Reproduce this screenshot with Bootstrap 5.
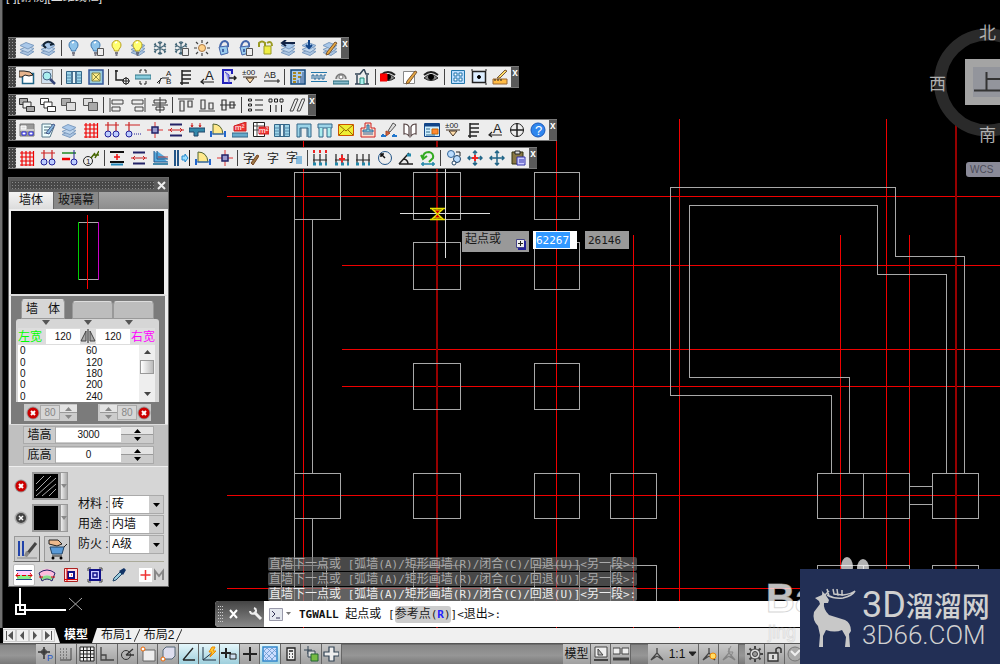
<!DOCTYPE html>
<html lang="zh-CN">
<head>
<meta charset="utf-8">
<meta name="viewport" content="width=device-width, initial-scale=1">
<title>墙体</title>
<link href="https://cdn.jsdelivr.net/npm/bootstrap@5.3.0/dist/css/bootstrap.min.css" rel="stylesheet">
<style>
  :root { --cjk: "Liberation Sans", "Noto Sans CJK SC", sans-serif; --mono: "DejaVu Sans Mono", "Noto Sans CJK SC", monospace; }
  body { font-family: var(--cjk); font-size: 12px; line-height: 16px; background: #000; color: #111; min-height: 100vh; }
  button, input, select { font: inherit; color: inherit; border: 0; padding: 0; margin: 0; border-radius: 0; min-width: 0; }
  svg { display: block; flex: none; }
  .workspace { background: #000; min-height: 600px; box-shadow: inset 2px 0 #707070, inset 3px 0 #333; }
  .plan { top: 0; left: 0; width: 100%; height: 100%; fill: none; }
  .view-label { left: 6px; top: -11px; color: #ddd; }

  /* floating toolbars */
  .toolbars { left: 8px; top: 37px; display: grid; grid-template-rows: 29px 28px 25px 28px 22px; }
  .toolstrip { height: 22px; background: #ededed; border-top: 1px solid #777; border-bottom: 1px solid #777; }
  .toolstrip .grip { width: 8px; background: #555 radial-gradient(#999 25%, #444 30%) 0 0 / 3px 3px; }
  .toolstrip .shut { width: 8px; background: #5a5a5a; color: #fff; font-size: 10px; line-height: 10px; font-weight: bold; align-self: stretch; display: flex; justify-content: center; padding-top: 1px; }
  .toolstrip .tool { flex: 1 1 0; background: none; display: flex; justify-content: center; align-items: center; }
  .toolstrip .rule { flex: 0 0 5px; display: flex; justify-content: center; }
  .rule::before { content: ""; width: 1px; height: 16px; background: #444; }
  #bar-layers { width: 341px; } #bar-annot { width: 511px; } #bar-order { width: 308px; }
  #bar-arch { width: 549px; } #bar-wall { width: 529px; }

  /* wall palette */
  .palette { left: 8px; top: 177px; width: 161px; border: 1px solid #666; background: #d6d6d6; }
  .palette-title { height: 14px; background: #5c5c5c; padding-left: 2px; }
  .palette-title .dots { height: 8px; background: radial-gradient(#8a8a8a 30%, #484848 35%) 0 0 / 3px 3px; }
  .palette-title button { width: 14px; background: none; color: #eee; }
  .modes { height: 17px; background: linear-gradient(#a5a5a5, #8d8d8d); }
  .modes button { width: 45px; background: #888; border-right: 1px solid #666; line-height: 15px; }
  .modes .on { background: linear-gradient(#f4f4f4, #dcdcdc); }
  .preview { background: #000; height: 87px; border: 2px solid #eee; border-right-width: 4px; border-bottom-color: #ddd; }
  .group { background: #7b7b7b; padding: 3px 6px 0 5px; height: 128px; border-left: 2px solid #eee; border-right: 3px solid #eee; }
  .leafs { height: 20px; padding: 0 5px; }
  .leafs button { width: 41px; height: 18px; background: #bdbdbd; border: 1px solid #999; border-top-color: #ddd; border-radius: 4px 4px 0 0; }
  .leafs .on { width: 44px; height: 20px; background: #d6d6d6; margin-right: 7px; }
  .sheet { background: #d6d6d6; border-radius: 3px 3px 0 0; padding: 0 4px 1px 2px; height: 83px; }
  .marks { height: 9px; padding: 1px 22px 0 24px; }
  .widths { height: 17px; background: #ddd; }
  .widths input { width: 34px; background: #fff; text-align: center; font-size: 10px; height: 15px; }
  .left-w { color: #0f0; } .right-w { color: #f0f; }
  .sizes { height: 57px; background: #fff; font-size: 10px; line-height: 11px; overflow: hidden; }
  .sizes table { line-height: 11px; width: 100%; }
  .sizes td { padding: 0; height: 11px; } .sizes td:first-child { width: 68px; padding-left: 2px; }
  .scroller { width: 16px; background: #eee; padding: 4px 1px; }
  .scroller .thumb { width: 14px; height: 14px; background: linear-gradient(90deg, #fff, #bbb); border: 1px solid #999; }
  .lockrow { height: 18px; margin-top: 2px; }
  .lockrow .cell { background: #c8c8c8; height: 17px; padding-left: 2px; }
  .lockrow input { width: 20px; background: #d6d6d6; border: 1px solid #aaa; text-align: center; font-size: 10px; color: #888; height: 15px; }
  .heights { background: #c0c0c0; height: 42px; padding: 1px 14px 0 14px; border-top: 1px solid #ddd; }
  .heights .line { height: 18px; margin-bottom: 2px; background: #ccc; border: 1px solid #aaa; }
  .heights label { width: 32px; text-align: center; border-right: 1px solid #aaa; }
  .heights input { flex: 1; text-align: center; font-size: 10px; background: #fff; height: 14px; }
  .spin { width: 32px; height: 16px; background: linear-gradient(#e4e4e4 7px, #999 7px 8px, #ccc 8px); display: flex; justify-content: center; align-items: center; }
  .spin.small-spin { width: 17px; }
  .finish { padding: 5px 4px 0 5px; height: 95px; border-top: 1px solid #eee; }
  .finish button { background: none; }
  .swatch { width: 28px; height: 28px; border: 2px solid #999 !important; background: #000 !important; }
  .more { width: 8px; height: 28px; background: linear-gradient(90deg, #eee, #aaa) !important; border: 1px solid #999 !important; }
  .finish .big { width: 26px; height: 26px; border: 1px solid #999; border-right-color: #666; border-bottom-color: #666; background: #ccc; }
  .props { padding-top: 22px; }
  .props label { width: 31px; white-space: nowrap; } .props .line { height: 20px; }
  .props select { width: 55px; height: 19px; padding: 0 2px; border: 1px solid #aaa; appearance: none; background: #fff url("data:image/svg+xml,%3Csvg xmlns='http://www.w3.org/2000/svg' width='14' height='17'%3E%3Cpath fill='%23ccc' d='M0 0h14v17H0z'/%3E%3Cpath d='M4 7h7l-3.5 4z'/%3E%3C/svg%3E") no-repeat right; }
  .kinds { border-top: 1px solid #aa9; margin: 0 4px; height: 25px; padding-top: 2px; }
  .kinds button { background: none; width: 24px; height: 22px; display: flex; justify-content: center; align-items: center; }
  .kinds .on { background: #fff; border: 1px solid #bbb; border-radius: 2px; width: 22px; }

  /* input beside the cursor */
  .dyn { left: 462px; top: 231px; font-size: 11px; line-height: 17px; color: #1a1a1a; font-family: var(--mono); }
  .dyn .ask { width: 67px; height: 21px; background: #999; padding: 0 3px; font-size: 12px; }
  .dyn .val { width: 44px; height: 18px; background: #999; padding: 1px 3px; border: 0; }
  .dyn .val input { width: 34px; height: 16px; background: none; }
  .dyn .val.live { background: #fff; } .dyn .val.live input { background: #39f; color: #fff; }

  /* command line */
  .console { left: 215px; right: 0; bottom: 1px; }
  .echo { margin-left: 53px; width: 369px; height: 14px; line-height: 14px; margin-bottom: 1px; background: rgba(120,120,120,.6); color: #aaa; border-radius: 2px; padding-left: 1px; white-space: nowrap; overflow: hidden; }
  .echo.now { color: #eee; background: rgba(130,130,130,.75); }
  .asc { font-family: var(--mono); font-size: 11px; white-space: pre; }
  .prompt { height: 26px; background: #fff; border-radius: 4px 0 0 4px; overflow: hidden; line-height: 24px; }
  .prompt .head { width: 49px; background: linear-gradient(#444, #888); padding-left: 3px; }
  .prompt button { background: none; }
  .prompt .opt { background: #ccc; border-radius: 3px; color: #222; text-decoration: none; line-height: 16px; display: inline-block; }
  .opt b { color: #22f; }

  .layouts { height: 15px; background: #f0f0f0; margin-left: 3px; line-height: 15px; }
  .layouts button { background: none; }
  .layouts .step { width: 13px; height: 13px; border: 1px solid #ccc; display: flex; justify-content: center; align-items: center; }
  .layouts .page { padding: 0 2px 0 4px; white-space: nowrap; }
  .layouts .cur { background: #000; color: #fff; font-weight: bold; width: 42px; padding: 0 7px; clip-path: polygon(0 0, 100% 0, 88% 100%, 12% 100%); }
  .status { height: 21px; background: linear-gradient(#555 0 1px, #868686 2px, #969696 60%, #787878); }
  .status .key { background: linear-gradient(#c8c8c8, #a0a0a0); border-right: 1px solid #666; height: 20px; display: flex; justify-content: center; align-items: center; flex: 1 1 0; }
  .status .hot { background: linear-gradient(#e4f6fa, #9ecfdc); }
  .toggles { width: 306px; margin-left: 36px; }
  .rightkeys { margin-left: 221px; }
  .rightkeys .key { flex: 0 0 20px; }
  .rightkeys .key.text { flex-basis: 28px; }
  .rightkeys .key.scale { flex-basis: 51px; margin-left: 17px; }
  .rightkeys .key.gear { margin-left: 6px; }

  .cube { right: 0; top: 20px; }
  .paws { right: 0; bottom: 0; width: 240px; height: 110px; }
  .ghost { right: 0; bottom: 0; }
  .brand { right: 0; bottom: 0; width: 200px; height: 95px; background: #222f55; color: #d0d0d0; padding: 15px 0 0 12px; z-index: 3; }
  .brand .words { font-family: Roboto, "Noto Sans CJK SC", sans-serif; white-space: nowrap; }
  .brand .top-line { font-size: 28px; line-height: 42px; height: 36px; font-weight: 500; }
  .brand .top-line span { font-size: 36px; font-weight: 400; }
  .brand .low-line { font-size: 26px; line-height: 30px; font-weight: 300; }
</style>
<script src="https://cdn.jsdelivr.net/npm/bootstrap@5.3.0/dist/js/bootstrap.bundle.min.js"></script>
</head>
<body class="d-flex flex-column position-relative overflow-hidden">

<main class="workspace position-relative flex-grow-1 overflow-hidden">
  <svg class="plan position-absolute" aria-label="plan">
    <g stroke="#f00000" shape-rendering="crispEdges">
      <path d="M227 196.500H4000M342 265.500H4000M342 349.500H4000M342 386.500H4000M227 495.500H4000M227 588.500H4000"/>
      <path d="M303.500 119V4000M556.500 119V4000M633.500 235V4000M679.500 119V4000M840.500 235V4000M886.500 119V4000M909.500 235V4000"/>
      <path stroke="#960000" stroke-width="2" d="M437 119V4000M956 119V4000"/>
    </g>
    <g stroke="#a8a8a8" shape-rendering="crispEdges">
      <path d="M294.500 172.500h46v47h-46zM413.500 172.500h47v47h-47zM534.500 172.500h45v47h-45zM413.500 242.500h47v47h-47zM534.500 242.500h45v47h-45zM413.500 363.500h47v46h-47zM534.500 363.500h45v46h-45z"/>
      <path d="M294.500 473.500h46v45h-46zM413.500 473.500h47v45h-47zM534.500 473.500h45v45h-45zM610.500 473.500h46v45h-46zM817.500 473.500h46v45h-46zM863.500 473.500h46v45h-46zM932.500 473.500h46v45h-46z"/>
      <path d="M281.500 565.500h45v47h-45zM413.500 565.500h47v47h-47zM534.500 565.500h45v47h-45zM610.500 565.500h46v47h-46zM817.500 565.500h92v47h-92zM863.500 565v47M932.500 565.500h46v47h-46z"/>
      <path d="M294.500 219V473M312.500 220V473M294.500 519V627M312.500 519V627M910 486.500H932M910 504.500H932"/>
      <path d="M831.500 473V395.500H670.500V187.500H895.500V256.500H964.500V473M849.500 473V377.500H689.500V205.500H877.500V274.500H946.500V473"/>
    </g>
    <path stroke="#ddd" d="M400 213.500h90M445.500 169v89"/>
    <g stroke="#e8e000"><path stroke-width="1.500" d="M430 208.500h15M430 219.500h15M432 209l11 10M443 209l-11 10"/><path fill="#c80000" d="M434 210h7l-3.500 4zM434 218h7l-3.500-4z"/></g>
    <g stroke="#fff" stroke-width="2"><path d="M20 588V604M25 610H66M16 605h9v9h-9z"/><path stroke-width="2" d="M20 606v4h4"/><path stroke="#aaa" stroke-width="1" d="M69 598l13 12M82 598l-13 12"/></g>
  </svg>
  <div class="view-label position-absolute">[-][俯视][二维线框]</div>

  <svg class="cube position-absolute" width="76" height="160" viewBox="924 20 76 160">
    <circle cx="988" cy="82.500" r="48" fill="none" stroke="#2a2a2a" stroke-width="12"/>
    <path fill="#a4a4a4" d="M965 59h40v46h-40z"/><path fill="#93959c" d="M973 67h30v30h-30z"/>
    <path stroke="#333" stroke-width="2" fill="none" d="M974 90.500h30M986.500 72v18M987 79h14"/>
    <g fill="#b0b0b0" font-size="17" font-family="Noto Sans CJK SC, sans-serif"><text x="979" y="39">北</text><text x="929" y="90">西</text><text x="979" y="141">南</text></g>
    <rect x="966" y="162" width="50" height="15" rx="3" fill="#8a8a98"/><text x="970" y="173" font-size="10" fill="#4c4c58" font-family="Liberation Sans, sans-serif">WCS</text>
  </svg>

  <div class="toolbars position-absolute" id="toolbars"></div>

  <section class="palette position-absolute">
    <div class="palette-title d-flex align-items-center"><div class="dots flex-grow-1"></div><button aria-label="关闭"><svg width="14" height="12"><path stroke="#eee" stroke-width="2" d="M4 3l7 7M11 3l-7 7"/></svg></button></div>
    <div class="modes d-flex"><button class="on">墙体</button><button>玻璃幕</button></div>
    <div class="preview"><svg class="mx-auto" width="152" height="83" viewBox="0 0 152 83" fill="none" shape-rendering="crispEdges"><path stroke="#aaa" d="M66 11.500h20M66 68.500h20"/><path stroke="#0c0" d="M66.500 11v58"/><path stroke="#c0c" d="M86 11v58"/><path stroke="red" d="M75.500 4v74"/></svg></div>
    <div class="group">
      <div class="leafs d-flex align-items-end"><button class="on">墙&nbsp;&nbsp; 体</button><button aria-label="2"></button><button aria-label="3"></button></div>
      <div class="sheet">
        <div class="marks d-flex justify-content-between"><svg width="8" height="5"><path fill="#555" d="M0 0h8L4 5z"/></svg><svg width="8" height="5"><path fill="#555" d="M0 0h8L4 5z"/></svg><svg width="8" height="5"><path fill="#555" d="M0 0h8L4 5z"/></svg></div>
        <div class="widths d-flex align-items-center"><label class="left-w" for="lw">左宽</label><input class="ms-1" id="lw" value="120"><svg width="16" height="15" viewBox="0 0 16 15"><path fill="#aaa" stroke="#444" d="M6 2v10H1zM10 2v10h5z"/><path stroke="#222" d="M8 0v14"/></svg><input id="rw" value="120"><label class="right-w ms-auto" for="rw">右宽</label></div>
        <div class="sizes d-flex"><table><tbody><tr><td>0</td><td>60</td></tr><tr><td>0</td><td>120</td></tr><tr><td>0</td><td>180</td></tr><tr><td>0</td><td>200</td></tr><tr><td>0</td><td>240</td></tr></tbody></table>
          <div class="scroller d-flex flex-column align-items-center justify-content-between"><svg width="7" height="5"><path d="M0 5h7L3.500 1z" fill="#444"/></svg><div class="thumb"></div><svg width="7" height="18"><path d="M0 12h7L3.500 16z" fill="#444"/></svg></div></div>
      </div>
      <div class="lockrow d-flex justify-content-between px-2">
        <div class="cell d-flex align-items-center"><svg width="14" height="14" viewBox="0 0 14 14"><use href="#no"/></svg><input aria-label="左" value="80"><div class="spin small-spin"><svg width="9" height="12"><path fill="#888" d="M1 4h7L4.500 0zM1 8h7L4.500 12z"/></svg></div></div>
        <div class="cell d-flex align-items-center"><div class="spin small-spin"><svg width="9" height="12"><path fill="#888" d="M1 4h7L4.500 0zM1 8h7L4.500 12z"/></svg></div><input aria-label="右" value="80"><svg width="14" height="14" viewBox="0 0 14 14"><use href="#no"/></svg></div>
      </div>
    </div>
    <div class="heights">
      <div class="line d-flex align-items-center"><label for="wh">墙高</label><input id="wh" value="3000"><div class="spin"><svg width="9" height="14"><path d="M1 5h7L4.500 1zM1 9h7L4.500 13z"/></svg></div></div>
      <div class="line d-flex align-items-center"><label for="bh">底高</label><input id="bh" value="0"><div class="spin"><svg width="9" height="14"><path d="M1 5h7L4.500 1zM1 9h7L4.500 13z"/></svg></div></div>
    </div>
    <div class="finish d-flex">
      <div class="d-flex flex-column">
        <div class="d-flex align-items-center mb-1"><svg class="me-1" width="14" height="14" viewBox="0 0 14 14"><use href="#no"/></svg><button class="swatch" aria-label="填充"><svg width="24" height="24"><path stroke="#aaa" d="M2 10l8-8M2 17L17 2M2 22L22 4M8 22L22 10M15 22l7-7"/></svg></button><button class="more" aria-label="更多"><svg width="6" height="4"><path fill="#888" d="M0 0h6L3 4z"/></svg></button></div>
        <div class="d-flex align-items-center mb-1"><svg class="me-1" width="14" height="14" viewBox="0 0 14 14"><circle cx="7" cy="7" r="6.500" fill="#aaa"/><circle cx="7" cy="7" r="5" fill="#444"/><path stroke="#fff" stroke-width="1.500" d="M5 5l4 4M9 5l-4 4"/></svg><button class="swatch" aria-label="颜色"></button><button class="more" aria-label="更多"><svg width="6" height="4"><path fill="#888" d="M0 0h6L3 4z"/></svg></button></div>
        <div class="d-flex gap-1"><button class="big" aria-label="替换"><svg width="24" height="22" viewBox="0 0 24 22"><path stroke="#24a" stroke-width="2" d="M4 3v15M8 3v15"/><path stroke="#888" d="M2 20h20"/><path stroke="#444" stroke-width="3" d="M21 5l-8 10"/><path fill="#888" d="M11 13l4 2-3 4-3-1z"/></svg></button><button class="big" aria-label="删除"><svg width="24" height="22" viewBox="0 0 24 22"><path fill="#edb98c" stroke="#222" d="M4 2l9 0 4 4-5 2-8-2z"/><path fill="#5b9bd8" stroke="#246" d="M5 9h14l-2 7H7z"/><path stroke="#222" fill="none" d="M19 9l3-3M7 18h10"/><circle cx="8" cy="20" r="1.500"/><circle cx="16" cy="20" r="1.500"/></svg></button></div>
      </div>
      <div class="props ms-auto">
        <div class="line d-flex align-items-center"><label for="mt">材料 :</label><select id="mt"><option>砖</option></select></div>
        <div class="line d-flex align-items-center"><label for="us">用途 :</label><select id="us"><option>内墙</option></select></div>
        <div class="line d-flex align-items-center"><label for="fr">防火 :</label><select id="fr"><option>A级</option></select></div>
      </div>
    </div>
    <div class="kinds d-flex align-items-center">
      <button class="on" aria-label="直墙"><svg width="18" height="16" fill="none"><path fill="#fcf" d="M2 3h14v5H2z"/><path fill="#8e8" d="M2 8h14v5H2z"/><path stroke="#248" d="M1 3.500h16M1 12.500h16"/><path stroke="#d00" d="M1 8.500h4M7 8.500h4M13 8.500h4M3 6l-2 2.500 2 2M15 6l2 2.500-2 2"/></svg></button>
      <button aria-label="弧墙"><svg width="18" height="16" fill="none"><path stroke="#fbd" stroke-width="5" d="M2 8Q9 1 16 8"/><path stroke="#8d8" stroke-width="3" d="M4 12q5-4 10 0"/><path stroke="#226" d="M1 6q8-6 16 0M4 14q5-4 10 0M1 6l3 8M17 6l-3 8"/><path stroke="#d00" d="M1 10h4M13 10h4"/></svg></button>
      <button aria-label="矩形"><svg width="16" height="16" fill="none"><path fill="#fdd" stroke="#a22" d="M1.500 1.500h13v13h-13z"/><path fill="#fff" stroke="#118" stroke-width="2" d="M5 5h6v6H5z"/><path stroke="#d00" d="M4 1v14M1 12.500h14M8 8h1"/></svg></button>
      <button aria-label="替换"><svg width="16" height="16" fill="none"><path stroke="#444" d="M1 4V1h3M12 1h3v3M15 12v3h-3M4 15H1v-3"/><path fill="#ccf" stroke="#118" stroke-width="2" d="M3 3h10v10H3z"/><path stroke="#118" stroke-width="1.500" d="M6 6h4v4H6z"/></svg></button>
      <button aria-label="拾取"><svg width="16" height="16"><path fill="#9cd" stroke="#246" d="M2 14l1-3 6-6 2 2-6 6z"/><path fill="#136" d="M8 4l5-3 2 2-3 5z"/></svg></button>
      <button class="ms-auto" aria-label="模数"><svg width="27" height="16"><path fill="#fff" d="M0 1h13v14H0z"/><path stroke="#e33" stroke-width="1.500" d="M6.500 3v10M1.500 8h10"/><path fill="none" stroke="#888" stroke-width="2" d="M16 13V4l4 5 4-5v9"/></svg></button>
    </div>
  </section>

  <div class="dyn position-absolute d-flex">
    <div class="ask d-flex"><span>起点或</span><svg class="ms-auto mt-2" width="10" height="11"><path fill="#eee" stroke="#448" d="M.5.5h8v8h-8z"/><path fill="none" stroke="#229" stroke-width="2" d="M9 2v8H2"/><path stroke="#222" d="M2 4.500h5M4.500 2v5"/></svg></div>
    <div class="val live ms-1 me-1"><input class="d-block" aria-label="X" value="62267"></div><div class="val ms-1"><input class="d-block" aria-label="Y" value="26146"></div>
  </div>

  <svg class="paws position-absolute" viewBox="0 0 240 110"><g fill="#fff" fill-opacity=".7"><ellipse cx="87" cy="49" rx="6" ry="10"/><ellipse cx="103" cy="50" rx="6" ry="9"/></g></svg>

  <div class="console position-absolute">
    <div class="echo">直墙下一点或<span class="asc"> [</span>弧墙<span class="asc">(A)/</span>矩形画墙<span class="asc">(R)/</span>闭合<span class="asc">(C)/</span>回退<span class="asc">(U)]&lt;</span>另一段<span class="asc">&gt;:</span></div>
    <div class="echo">直墙下一点或<span class="asc"> [</span>弧墙<span class="asc">(A)/</span>矩形画墙<span class="asc">(R)/</span>闭合<span class="asc">(C)/</span>回退<span class="asc">(U)]&lt;</span>另一段<span class="asc">&gt;:</span></div>
    <div class="echo now mb-0">直墙下一点或<span class="asc"> [</span>弧墙<span class="asc">(A)/</span>矩形画墙<span class="asc">(R)/</span>闭合<span class="asc">(C)/</span>回退<span class="asc">(U)]&lt;</span>另一段<span class="asc">&gt;:</span></div>
    <div class="prompt d-flex align-items-center">
      <div class="head d-flex align-items-center align-self-stretch">
        <svg width="6" height="18" fill="#ccc"><path stroke="#ccc" stroke-dasharray="1 2" d="M.5 1v16M2.500 1v16M4.500 1v16"/></svg>
        <button class="ms-1" aria-label="关闭"><svg width="12" height="12"><path stroke="#fff" stroke-width="2" d="M2 2l7 8M9 2l-7 8"/></svg></button>
        <button class="ms-2" aria-label="设置"><svg width="16" height="16" fill="none"><path stroke="#eee" stroke-width="3" d="M6 6l7 7"/><path stroke="#eee" stroke-width="2" d="M2 5a3 3 0 1 0 4-3"/></svg></button>
      </div>
      <svg class="ms-1" width="23" height="15" fill="none"><path fill="#e4e8ee" stroke="#99a" d="M1.500 1.500h13v12h-13z"/><path stroke="#335" d="M4 4l3 3-3 3M8 11h4"/><path fill="#777" d="M18 5h5l-2.500 3z"/></svg>
      <div class="ms-2 text-nowrap"><span class="asc fw-bold">TGWALL </span>起点或<span class="asc"> [</span><a href="#" class="opt">参考点<span class="asc">(<b>R</b>)</span></a><span class="asc">]&lt;</span>退出<span class="asc">&gt;:</span></div>
    </div>
  </div>
</main>

<nav class="layouts d-flex align-items-center">
  <button class="step" aria-label="首页"><svg width="9" height="9"><path stroke="#555" d="M1.500 0v9"/><path fill="#555" d="M8 0v9L3 4.500z"/></svg></button>
  <button class="step" aria-label="上一页"><svg width="9" height="9"><path fill="#555" d="M6 0v9L2 4.500z"/></svg></button>
  <button class="step" aria-label="下一页"><svg width="9" height="9"><path fill="#555" d="M2 0v9l4-4.500z"/></svg></button>
  <button class="step" aria-label="末页"><svg width="9" height="9"><path stroke="#555" d="M7.500 0v9"/><path fill="#555" d="M1 0v9l5-4.500z"/></svg></button>
  <button class="page cur">模型</button><button class="page">布局1</button><svg width="6" height="15"><path stroke="#333" d="M0 14L6 1"/></svg><button class="page">布局2</button><svg width="6" height="15"><path stroke="#333" d="M0 14L6 1"/></svg>
</nav>

<footer class="status d-flex align-items-end">
  <div class="toggles d-flex" id="toggles"></div>
  <div class="rightkeys d-flex" id="rightkeys"></div>
</footer>

<svg class="ghost position-absolute" width="240" height="90" viewBox="760 574 240 90"><g fill="#fff" font-family="Liberation Sans, sans-serif"><text x="766" y="612" font-size="40" font-weight="bold" fill-opacity=".75" stroke="#bbb" stroke-opacity=".6">Ba</text><text x="768" y="638" font-size="18" fill-opacity=".6" stroke="#bbb" stroke-opacity=".4">jing</text></g></svg>
<a class="brand position-absolute d-flex text-decoration-none" href="#">
  <svg class="mt-1" width="46" height="62" viewBox="0 0 46 62"><path fill="#c8c8c8" d="M3 10L10 7Q11 3 8 1L13 6L17 12L16 15H12Q11 21 17 27L33 32Q39 35 39 43L37 46L38 59H33L34 49L30 42Q23 45 14 42L11 48V59H7L8 47L6 38Q0 32 2 24L8 16L7 13z"/><path fill="none" stroke="#c8c8c8" stroke-width="1.500" d="M12 8L17 3M17 8L15 1M15 7Q22 11 31 10Q40 8 43 3Q39 6 31 7L22 6L21 1M26 8L25 1M30 8L30 2"/></svg>
  <div class="words ms-1"><div class="top-line"><span>3D</span>溜溜网</div><div class="low-line">3D66.COM</div></div>
</a>

<svg width="0" height="0" class="position-absolute"><defs><g id="no"><circle cx="7" cy="7" r="6.500" fill="#999"/><circle cx="7" cy="7" r="5.500" fill="#c00"/><path stroke="#fff" stroke-width="2" d="M5 5l4 4M9 5l-4 4"/></g></defs></svg>

<script>
// Drawings on a 16 x 16 field
const p = (d, stroke = '#222', fill = 'none', w = 1) => `<path d="${d}" stroke="${stroke}" fill="${fill}" stroke-width="${w}"/>`;
const t = (s, x, y, size, color = '#222') => `<text x="${x}" y="${y}" font-size="${size}" fill="${color}" font-family="Liberation Sans, Noto Sans CJK SC, sans-serif">${s}</text>`;
const layers = p('M1 12.500l7-3 7 2-6 4z', '#7d9cc0', '#a9c3e0') + p('M1 9.500l7-3 7 2-6 4z', '#7d9cc0', '#bfd5ec') + p('M1 5.500l6-3 8 3-6 3.500z', '#7d9cc0', '#a9c8ea');
const bulb = c => p('M5.500 11C5 8 3 8 3 5a4.500 4.500 0 0 1 9 0c0 3-2 3-2.500 6z', c[0], c[1]) + p('M6 13h3M6.500 15h2', '#556', 'none', 1.500) + p('M6 3l2-1', '#fff', 'none', 1.500);
const blue = ['#3f78ae', '#8fc4ea'], yel = ['#b8a020', '#ffff70'];
const page = p('M9.500 8.500h6v7h-6z', '#555', '#eee');
const snow = p('M8 1v14M2 4.500l12 7M2 11.500l12-7M6 2l2 2 2-2M6 14l2-2 2 2M2 7l2-1-1-3M14 7l-2-1 1-3M2 9l2 1-1 3M14 9l-2 1 1 3', '#467', 'none', 1.200);
const lock = (a, b) => p('M4 7Q5 1 9 1q4 1 3 6', a, 'none', 2) + p('M3 7l8-1 1 7-7 2z', a, b) + p('M7 9v3', a, 'none', 2);
const grid = p('M1 3h14M1 7h14M1 11h14M1 15h14M3 1v15M7 1v15M11 1v15M14.500 1v15', '#e00', 'none', 1.200);
const circ = (x, y, r, s, f = 'none') => `<circle cx="${x}" cy="${y}" r="${r}" stroke="${s}" fill="${f}"/>`;
const panels = p('M.5 2.500h15v12H.5z', '#368', '#9cd4e8') + p('M6 3v11M10 3v11', '#357', 'none', 1.500) + p('M1 6h5M10 6h5M1 9h5M10 9h5M1 12h5M10 12h5', '#58a') + p('M8 3v11', '#fff', 'none', 1.500);
const quarter = p('M3 12V2q9 0 10 10z', '#563', '#ffe98c') + p('M1 9v6M15 9v6', '#26c', 'none', 2) + p('M1 12h14', '#26c');
const node = p('M8 0v16M0 8h16', '#d33') + p('M5 5h6v6H5z', '#226', '#99c', 1.500);
const wallDim = p('M2 2.500h12M2 13.500h12', '#226', 'none', 2) + p('M0 8h16M4 6L2 8l2 2M12 6l2 2-2 2', '#c22');
const elev = t('±00', 0, 6, 8) + p('M1 8h14M4 9l4 5 4-5z', '#432', '#fda');
const pen = p('M5 12L13 2l2 1-8 11-3 1z', '#753', '#e8a840');
const arrowA = t('A', 5, 11, 13) + p('M1 13h13M4 10l-3 3 3 2', '#222', 'none', 1.200);
const comb = p('M4 1v15M4 2h9M4 6h9M4 10h9M2 14h9', '#222', 'none', 1.500);
const stack = (a, b) => p('M.5 1.500h8v6h-8z', '#333', a) + p('M4 5h8v6H4z', '#333', b) + p('M7.500 9.500h8v5h-8z', '#333', a);
const pair = (x) => p('M.5 1.500h9v7h-9z', '#555', x ? '#ddd' : '#aaa') + p('M5.500 5.500h9v8h-9z', '#555', x ? '#aaa' : '#ddd');
const axis = p('M1 3h14M4 0v9M12 0v9', '#c22', 'none', 1.200) + circ(4, 12, 3, '#229', '#bcf') + circ(12, 12, 3, '#229', '#bcf');
const hand = p('M0 2h5l6 1 3 3-4 1-4-1-3 2H0z', '#222', '#e7b48c');
const dims = (s) => p('M2 4v11M8 4v11M14 4v11M1 10h14', '#222', 'none', 1.200) + s + p('M1 14h3M7 14h3M13 14h2', '#28a', 'none', 3);
const eye = p('M1 9q7-7 14 0Q8 14 1 9z', '#222', '#888') + circ(8, 8, 2.500, '#000', '#000') + p('M1 6q7-6 14 0', '#222', 'none', 2);
const move = c => p('M8 1v14M1 8h14M6 3l2-2 2 2M6 13l2 2 2-2M3 6L1 8l2 2M13 6l2 2-2 2', c, 'none', 1.500);
const I = {
  layers, prev: layers + p('M3 5q5-6 10-1l-3 1M3 5l3 3', '#123', 'none', 2),
  bulbB: bulb(blue), bulbBP: bulb(blue) + page, bulbY: bulb(yel), bulbL: layers + bulb(yel), snow, snowP: snow + page,
  sun: circ(8, 8, 3.500, '#a74', '#ffd28a') + p('M8 0v3M8 13v3M0 8h3M13 8h3M2 2l2 2M12 12l2 2M14 2l-2 2M4 12l-2 2', '#444', 'none', 1.200),
  lockB: lock('#46a', '#9ce'), lockBP: lock('#46a', '#9ce') + page, lockY: p('M1 7V3q3-3 6 0v5', '#992', 'none', 2) + p('M6 6h7v8H6z', '#992', '#ee4') + p('M9 3q5-3 5 3', '#992', 'none', 2),
  lyL: layers + p('M15 3H3M6 0L2 3l4 3', '#124', 'none', 2), lyD: layers + p('M8 0v7M5 5l3 3 3-3', '#148', 'none', 2), lyP: layers + pen,
  hand: p('M3.500 4.500h11v10h-11z', '#268', '#fff', 1.500) + hand, find: p('M1.500.5h11v14h-11z', '#999', '#cfe0ee') + circ(7, 7, 4, '#468', '#aee') + p('M10 10l5 5', '#347', 'none', 2.500), panels,
  boxx: p('M1 1h14v14H1z', '#359', '#9cd', 1.500) + p('M4 4h8v8H4zM4 4l8 8M12 4l-8 8', '#884', '#fe8'),
  ell: p('M2 1v10h8M1 2h3', '#222', 'none', 1.500) + circ(12, 12, 3, '#222') + p('M12 8v8M8 12h8', '#222'),
  sect: p('M0 6h16v4H0z', '#378', '#8cd') + p('M5 4V1h2M11 4V1H9M5 12v3h2M11 12v3H9', '#222'),
  lead: p('M0 14l5-5h7M2 15l2-6') + t('A', 9, 7, 8) + t('B', 9, 15, 8), comb, arrowA,
  door: p('M11 14H2V1h9v4', '#22b', '#dde', 2) + p('M4 3l4 3v8', '#44c', '#99e') + p('M8 9h7M13 7l2 2-2 2', '#222', 'none', 1.500), elev,
  abo: t('AB', 0, 9, 9) + p('M0 12h16M14 10v4'),
  cal: p('M1 1h14v14H1z', '#147', '#ace', 1.500) + p('M3 4h3M3 7h3M3 10h3M3 13h3M8 4h3M8 8h3', '#a82', 'none', 2) + p('M8 11v3M11 7v7M13 3v11', '#358'),
  wave: p('M0 3.500h16M0 12.500h16', '#27a') + p('M1 10V6h2v4h2V6h2v4h2V6h2v4h2V6h2', '#269'),
  arch: p('M3 10a5 5 0 0 1 10 0', '#777', '#ccc', 1.500) + circ(8, 8, 2, '#777', '#fff') + p('M0 12h16v3H0z', '#267', '#8bc'),
  house: p('M1 5h5L10 0l2 5h3M3 6v9M13 6v9M1 15h14', '#345', 'none', 1.500) + p('M6 15V9h4v6', '#287', '#aee'),
  redeye: eye + p('M0 5h7v7H0z', '#e00', '#f00'), note: p('M1.500 2.500h11v12h-11z', '#888', '#fff') + pen, eye,
  four: p('M1.500 1.500h13v13h-13z', '#27a', '#bdf') + p('M4 4h3v3H4zM9 4h3v3H9zM4 9h3v3H4zM9 9h3v3H9z', '#27a', '#fff'),
  dot: p('M1.500 2.500h13v11h-13z', '#222', '#def', 1.500) + p('M1 0v2M15 0v2M15 14v2', '#222') + circ(8, 8, 1.500, '#000', '#000'),
  rule: p('M1 10h14v5H1z', '#963', '#fb4') + p('M3 10v2M6 10v2M9 10v2') + p('M5 9l8-8 2 1-7 7z', '#753', '#fd6'),
  st1: stack('#aaa', '#eee'), st2: stack('#fff', '#fff'), st3: pair(0), st4: pair(1),
  al1: p('M1 1v14M3 3h11v4H3zM3 10h8v4H3z', '#444'), al2: p('M15 1v14M2 3h11v4H2zM5 10h8v4H5z', '#444'), al3: p('M8 0v16M2 3h12v3H2zM4 10h8v3H4zM0 8h16', '#333'),
  al4: p('M0 2h16M2 4h4v10H2zM10 4h4v6h-4z', '#444', 'none', 1.200), al5: p('M0 14h16M2 3h4v9H2zM10 6h4v6h-4z', '#444', 'none', 1.200), al6: p('M0 8h16M2 3h4v10H2zM10 5h4v6h-4z', '#333', 'none', 1.200),
  ls: p('M1.500 2h3v2h-3zM1.500 7h3v2h-3zM1.500 12h3v2h-3zM8 3h8M8 8h8M8 13h8'), ls2: p('M1 2h3v3H1zM6.500 2h3v3h-3zM12 2h3v3h-3zM2.500 8v7M8 8v7M13.500 8v7'), sl: p('M1 14L6 2h3L4 14zM8 14l5-12h3l-5 12z', '#444'),
  table: p('M1 2h14v12H1z', '#777', '#999') + p('M2 4h5v3H2z', '#fff', '#ddd') + p('M3 10h4v3H3zM10 10h4v3h-4z', '#22d', '#fff') + p('M1 8h14', '#fff'),
  sheet: p('M2 2h9l3 3-4 10H2z', '#578', '#eff') + p('M4 5h6M4 8h5M4 11h4', '#467') + p('M6 11l7-9 2 1-6 9z', '#458', '#8bd'),
  grid, axis, axis2: p('M0 3h15M4 0v9', '#c22', 'none', 1.200) + circ(4, 12, 3, '#229', '#bcf') + p('M9 12h1M11 12h1M13 12h1M15 12h1', '#229', 'none', 1), node, wallDim,
  duct: p('M0 6h16v4H9v4H5v-4H0z', '#246', '#38a') + p('M3 1v4M11 1v4M2 3l1 2 1-2M10 3l1 2 1-2', '#c22'), quarter,
  m2: p('M2 4L14 0v9H2z', '#c22', '#e33') + t('m²', 3, 8, 8, '#fff') + p('M0 11h16v4H0z', '#368', '#6ac'),
  m2b: p('M.5.500h11v14H.5z', '#222', '#fff') + p('M1 4h10M1 8h10M4 1v13', '#444') + p('M6 5h10v7H6z', '#c22', '#e33') + t('m²', 6, 11, 8, '#fff'),
  win: p('M1 2h14v13h-3V6H4v9H1z', '#368', '#9cd4e8') + p('M5 6v9M11 6v9', '#368'), win2: p('M1 2h14v4H1z', '#368', '#9cd4e8') + p('M2 6v9h4V6M10 6v9h4V6', '#368', '#aee'),
  mail: p('M.5 2.500h15v11H.5z', '#c50', '#ee3') + p('M1 3l7 6 7-6M1 13l5-5M15 13l-5-5', '#960'),
  stamp: p('M5 1h6v5h4v9H1V6h4z', '#c22', '#fdc') + p('M7 3h2v5h4v2H3V8h4zM3 12h10', '#369', '#8cd'),
  brush: p('M7 9l5-8 3 2-6 7z', '#555', '#ddd') + p('M5 9l4 2-4 3z', '#a42', '#c64') + p('M0 14h5M11 14h5M2 12v3M13 12v3', '#27c', 'none', 2),
  book: p('M2 2q4 0 5 3v9q-2-3-5-2zM14 2q-4 0-5 3v9q2-3 5-2z', '#544', '#fff', 1.200), app: p('M.5 1.500h15v13H.5z', '#148', '#cef') + p('M1 3h14', '#148', 'none', 3) + p('M8 7h6v5H8z', '#c60', '#f83') + p('M2 7h4M2 10h4M2 13h9', '#368'),
  compass: circ(8, 8, 6.500, '#222') + p('M8 1v14M1 8h14', '#222', 'none', 1.500), help: circ(8, 8, 7, '#1b58b8', '#2f86ee') + t('?', 5, 13, 13, '#fff'),
  axis3: p('M0 3h14', '#282', 'none', 1.500) + p('M0 9h8', '#e00', 'none', 2.500) + p('M12 0v9', '#229') + circ(12, 12, 3, '#229', '#bcf'), tag: circ(5, 11, 4.500, '#222') + t('1', 3, 14, 8) + p('M8 8l4-5M10 5h6M12 8l4-7', '#460', 'none', 1.500),
  wp: p('M1 2h14M1 12h14', '#111', 'none', 2) + p('M2 14.500h12', '#28b', 'none', 2) + p('M8 4v6M5 7h6', '#e11', 'none', 1.500), wl: p('M2 1v11h14M5 1v8h11', '#258', '#5ad') + p('M6 7h10', '#a33') + p('M1 14h15', '#48a', 'none', 2),
  wr: p('M1 0v16M4 0v16', '#258', 'none', 2) + p('M8 6h3V4l3 4-3 4v-2H8z', '#28c', '#9df') + p('M15.500 0v16'),
  ziP: t('字', 0, 13, 12) + p('M8 13l6-8 2 1-6 9z', '#742', '#974'), zi: t('字', 2, 13, 12), ziL: t('字', 0, 12, 12) + p('M10 7h6M10 9h6M10 11h6M10 13h6', '#28c'),
  d1: dims(p('M2 0v3M8 0v3M14 0v3', '#e22', 'none', 2)), d2: dims(p('M5 9h6M8 5v8', '#e22', 'none', 2)), d3: dims(''), rad: circ(8, 8, 6.500, '#258') + p('M8 8L4 4M4 7V4h3', '#111', 'none', 1.500),
  ang: p('M1 14h14M1 14L11 3M6 9q4 1 4 5', '#222', 'none', 1.500) + p('M9 5h4', '#28a', 'none', 3), rot: p('M3 8q0-6 6-6 5 1 4 6l-4 4M1 5l2 4 4-3', '#3a2', 'none', 2) + p('M1 14h14M3 12v4M13 12v4', '#28a', 'none', 1.500),
  cp: circ(5, 4, 3.500, '#369', '#bdf') + circ(11, 9, 3.500, '#246', '#bdf') + circ(8, 13, 2, '#246', '#fff') + p('M10 2h4v4', '#222'), mv1: move('#268') + p('M5 8h6M8 5v6', '#e22', 'none', 2), mv2: move('#268'), paste: p('M2 2h11v12H2z', '#331', '#874') + p('M5 1h5v3H5z', '#222', '#ddd') + p('M7 7h8v8H7z', '#33a', '#ccf') + p('M9 10h5M9 12h5', '#33a')
};
const bars = {
  'bar-layers': 'layers prev | bulbB bulbBP bulbY bulbL snow snowP sun lockB lockBP lockY lyL lyD lyP',
  'bar-annot': 'hand find | panels boxx | ell sect lead comb arrowA door elev abo | cal wave arch house | redeye note eye | four dot rule',
  'bar-order': 'st1 st2 st3 st4 | al1 al2 al3 | al4 al5 al6 | ls ls2 sl',
  'bar-arch': 'table sheet layers grid axis axis2 node wallDim duct quarter m2 m2b panels win win2 mail stamp brush book app elev comb arrowA compass help',
  'bar-wall': 'grid axis axis3 tag | wp wallDim wl wr quarter node | ziP zi ziL | d1 d2 d3 rad ang rot | cp mv1 mv2 paste'
};
const svg = (s, w = 16) => `<svg width="${w}" height="16" viewBox="0 0 ${w} 16">${s}</svg>`;
document.getElementById('toolbars').innerHTML = Object.entries(bars).map(([id, list]) =>
  `<div class="toolstrip d-flex" id="${id}" role="toolbar"><div class="grip"></div>` +
  list.split(' ').map(n => n === '|' ? '<div class="rule align-self-center"></div>' : `<button class="tool" aria-label="${n}">${svg(I[n])}</button>`).join('') +
  '<button class="shut" aria-label="关闭">x</button></div>').join('');

const S = [
  p('M6 1v12M0 6h12', '#333', 'none', 1.500) + p('M4 4h4v4H4z', '#333') + t('P', 9, 15, 9, '#25c'), p('M2 3h9M2 6h9M2 9h9M2 12h9', '#444').replace('/>', ' stroke-dasharray="1 2"/>') + p('M13 2v12H2', '#444'),
  p('M1 1h14v14H1zM1 4.500h14M1 8h14M1 11.500h14M4.500 1v14M8 1v14M11.500 1v14', '#222', '#eee'), p('M2 1v13h13M2 9h5v5', '#444', 'none', 1.300), circ(7, 9, 4.500, '#333') + p('M7 9h8M7 9l7-6', '#333', 'none', 1.300),
  p('M3 4h12v11H3z', '#666', '#eee') + circ(3, 3, 2, '#e60', '#fff'), p('M3 4l3-3h9v9l-3 3H3z', '#567', '#dde') + circ(3, 13, 2, '#e60', '#fff'), p('M2 14L12 2M2 14h12', '#222', 'none', 1.300),
  p('M2 1v13h13M2 14L12 6', '#234') + p('M11 1L8 6h3l-2 5 6-6h-3l2-4z', '#e80', '#fc3'), p('M0 7h10M5 2v10', '#222', 'none', 2) + p('M9 8h6v5H9z', '#222', '#cde'), p('M1 8h14M8 1v14', '#222', 'none', 2),
  p('M1 1h14v14H1z', '#38c', '#cdf', 1.500) + p('M2 5l10 10M2 10l4 4M5 2l9 9M10 2l4 4M2 5l3-3M2 10l8-8M3 14L14 3M9 14l5-5', '#69c', 'none', .8), p('M4 2h8v12H4zM6 5h4M6 8h1M9 8h1M6 11h1M9 11h1', '#222', '#eee', 1.300),
  p('M1 4h8M5 0v8', '#345') + p('M5 5h7v6H5z', '#345', '#ddd') + p('M8 8h7v7H8z', '#263', '#7b4'), p('M6 1h5v5h5v4h-5v5H6v-5H1V6h5z', '#345', '#eee', 1.200)
];
document.getElementById('toggles').innerHTML = S.map((s, i) => `<button class="key${[7, 8, 9, 11].includes(i) ? ' hot' : ''}" aria-label="${i + 1}">${svg(s)}</button>`).join('');

const person = p('M8 2v5l6 7-6-4-6 4 6-7', '#444', '#eee', 1.300);
const R = [
  ['text', '模型'], ['', svg(p('M2 1h12v10H2zM5 3v6h5z', '#444', '#eee') + p('M1 14h14', '#444', 'none', 2))], ['', svg(p('M0 2h7v6H0zM9 2h7v6H9z', '#444', '#eee') + p('M0 13h16', '#444', 'none', 3))],
  ['scale', svg(person) + '<span class="mx-1">1:1</span>' + svg(p('M0 6h7L3.500 10z', '#222', '#222'), 8)],
  ['', svg(person + circ(12, 10, 3, '#e80', '#fd6'))], ['', svg('<g opacity=".4">' + person + p('M10 0L7 6h5l-3 6', '#444') + '</g>')],
  ['gear', svg(circ(8, 8, 5, '#444', '#ddd') + circ(8, 8, 2.500, '#444', '#999') + p('M8 0v3M8 13v3M0 8h3M13 8h3M2.500 2.500l2 2M11.500 11.500l2 2M13.500 2.500l-2 2M4.500 11.500l-2 2', '#444', 'none', 2))],
  ['', svg(p('M1 7h10v8H1z', '#333', '#ddd', 1.300) + p('M9 7V3q3-3 5 0v4M6 9v4', '#333', 'none', 1.500))], ['', svg(circ(8, 8, 7, '#777', '#aaa') + p('M4 5l4 4 5-5', '#eee', 'none', 2))]
];
document.getElementById('rightkeys').innerHTML = R.map(([c, s], i) => `<button class="key ${c}" aria-label="${c === 'text' ? s : c === 'scale' ? '1:1' : 'r' + i}">${s}</button>`).join('');
</script>
</body>
</html>
